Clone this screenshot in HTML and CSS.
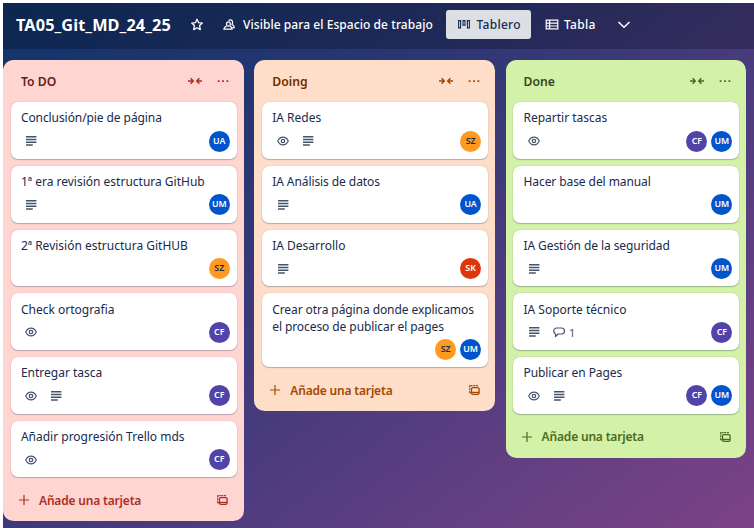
FILE: index.html
```html
<!DOCTYPE html>
<html lang="es">
<head>
<meta charset="utf-8">
<title>TA05_Git_MD_24_25</title>
<link rel="stylesheet" href="styles.css">
</head>
<body>
<svg class="defs" width="0" height="0" aria-hidden="true">
  <symbol id="desc" viewBox="0 0 14 14"><path d="M2 2.800h10.400M2 5.500h10.400M2 8.200h10.400M2 10.900h6.800" stroke="currentColor" stroke-width="1.500" fill="none"/></symbol>
  <symbol id="eye" viewBox="0 0 14 14"><path d="M1.700 7C2.900 4.500 4.700 3.100 7 3.100s4.100 1.400 5.300 3.900C11.100 9.500 9.300 10.900 7 10.900S2.900 9.500 1.700 7Z" fill="none" stroke="currentColor" stroke-width="1.100"/><circle cx="7" cy="7" r="1.700" fill="none" stroke="currentColor" stroke-width="1.200"/></symbol>
  <symbol id="comment" viewBox="0 0 14 14"><path d="M4.800 3h4.700a3 3 0 0 1 0 6H6.200L3.500 11.600V9C2.300 8.300 1.700 7.200 1.700 6.100A3.100 3.100 0 0 1 4.800 3Z" fill="none" stroke="currentColor" stroke-width="1.200" stroke-linejoin="round"/></symbol>
  <symbol id="collapse" viewBox="0 0 16 10"><path d="M1 5h5M3.600 2.200 6.300 5 3.600 7.800M15 5h-5M12.400 2.200 9.700 5l2.700 2.800" fill="none" stroke="currentColor" stroke-width="1.500" stroke-linejoin="round"/></symbol>
  <symbol id="more" viewBox="0 0 12 4"><path d="M.7 1.200h1.800v1.800H.7zM5.100 1.200h1.800v1.800H5.100zM9.500 1.200h1.800v1.800H9.500z" fill="currentColor"/></symbol>
  <symbol id="plus" viewBox="0 0 12 12"><path d="M6 1v10M1 6h10" stroke="currentColor" stroke-width="1.200"/></symbol>
  <symbol id="template" viewBox="0 0 12 12"><path d="M1.700 9V1.700h8.600M1.700 9h1.500" fill="none" stroke="currentColor" stroke-width="1.200" stroke-dasharray="2 .7"/><rect x="3.500" y="3.700" width="7.600" height="6.600" rx="1.400" fill="none" stroke="currentColor" stroke-width="1.300"/><path d="M3.500 7.800h7.600v1.300H3.500z" fill="currentColor"/></symbol>
</svg>

<div class="app">
  <header class="bar">
    <h1>TA05_Git_MD_24_25</h1>
    <svg class="star" viewBox="0 0 14 14"><path d="m7 1.300 1.600 3.400 3.700.4-2.700 2.500.7 4L7 9.800l-3.300 1.800.7-4-2.700-2.500 3.700-.4Z" fill="none" stroke="currentColor" stroke-width="1.300" stroke-linejoin="round"/></svg>
    <svg class="people" viewBox="0 0 14 14"><ellipse cx="6.400" cy="6" rx="1.900" ry="2.100" fill="none" stroke="currentColor" stroke-width="1.200"/><path d="M4.600 8.100C3.100 8.500 2.200 9.500 1.800 11.200h8.400C9.900 9.600 9.200 8.600 8 8.100M6.600 2.700C7.200 2 8 1.700 8.800 1.900c2 .5 2.300 3 1.100 4.500 1.500.6 2.300 1.700 2.500 3.300h-2" fill="none" stroke="currentColor" stroke-width="1.200" stroke-linejoin="round"/></svg>
    <span class="visibility">Visible para el Espacio de trabajo</span>
    <a class="view active"><svg viewBox="0 0 14 12"><path d="M1.600 1.600h2v7.300h-2zM6 1.600h2v4.500H6zM10.400 1.600h2v7.300h-2z" fill="none" stroke="currentColor" stroke-width="1.100"/></svg><span>Tablero</span></a>
    <a class="view table"><svg viewBox="0 0 14 12"><path d="M1.200 1.200h11.600v8.600H1.200zM1.200 4.100h11.600M1.200 7h11.600M4.600 1.200v8.600" fill="none" stroke="currentColor" stroke-width="1.200"/></svg><span>Tabla</span></a>
    <svg class="chevron" viewBox="0 0 14 10"><path d="m1.500 2 5.500 5.300L12.500 2" fill="none" stroke="currentColor" stroke-width="1.500"/></svg>
  </header>

  <main class="board">
    <section class="list red">
      <header><h2>To DO</h2><svg class="collapse"><use href="#collapse"/></svg><svg class="more"><use href="#more"/></svg></header>
      <article><p class="tight">Conclusión/pie de página</p><div class="meta"><svg><use href="#desc"/></svg><div class="who"><b class="blue">UA</b></div></div></article>
      <article><p>1ª era revisión estructura GitHub</p><div class="meta"><svg><use href="#desc"/></svg><div class="who"><b class="blue">UM</b></div></div></article>
      <article><p>2ª Revisión estructura GitHUB</p><div class="meta"><div class="who"><b class="orange-user">SZ</b></div></div></article>
      <article><p>Check ortografia</p><div class="meta"><svg><use href="#eye"/></svg><div class="who"><b class="violet">CF</b></div></div></article>
      <article><p>Entregar tasca</p><div class="meta"><svg><use href="#eye"/></svg><svg><use href="#desc"/></svg><div class="who"><b class="violet">CF</b></div></div></article>
      <article><p>Añadir progresión Trello mds</p><div class="meta"><svg><use href="#eye"/></svg><div class="who"><b class="violet">CF</b></div></div></article>
      <footer><svg class="plus"><use href="#plus"/></svg><span>Añade una tarjeta</span><svg class="template"><use href="#template"/></svg></footer>
    </section>

    <section class="list peach">
      <header><h2>Doing</h2><svg class="collapse"><use href="#collapse"/></svg><svg class="more"><use href="#more"/></svg></header>
      <article><p>IA Redes</p><div class="meta"><svg><use href="#eye"/></svg><svg><use href="#desc"/></svg><div class="who"><b class="orange-user">SZ</b></div></div></article>
      <article><p class="tight">IA Análisis de datos</p><div class="meta"><svg><use href="#desc"/></svg><div class="who"><b class="blue">UA</b></div></div></article>
      <article><p>IA Desarrollo</p><div class="meta"><svg><use href="#desc"/></svg><div class="who"><b class="scarlet">SK</b></div></div></article>
      <article><p class="tight">Crear otra página donde explicamos<br>el proceso de publicar el pages</p><div class="meta"><div class="who"><b class="orange-user">SZ</b><b class="blue">UM</b></div></div></article>
      <footer><svg class="plus"><use href="#plus"/></svg><span>Añade una tarjeta</span><svg class="template"><use href="#template"/></svg></footer>
    </section>

    <section class="list lime">
      <header><h2>Done</h2><svg class="collapse"><use href="#collapse"/></svg><svg class="more"><use href="#more"/></svg></header>
      <article><p>Repartir tascas</p><div class="meta"><svg><use href="#eye"/></svg><div class="who"><b class="violet">CF</b><b class="blue">UM</b></div></div></article>
      <article><p class="tight">Hacer base del manual</p><div class="meta"><div class="who"><b class="blue">UM</b></div></div></article>
      <article><p class="tight">IA Gestión de la seguridad</p><div class="meta"><svg><use href="#desc"/></svg><div class="who"><b class="blue">UM</b></div></div></article>
      <article><p>IA Soporte técnico</p><div class="meta"><svg><use href="#desc"/></svg><svg><use href="#comment"/></svg><span class="count">1</span><div class="who"><b class="violet">CF</b></div></div></article>
      <article><p class="tight">Publicar en Pages</p><div class="meta"><svg><use href="#eye"/></svg><svg><use href="#desc"/></svg><div class="who"><b class="violet">CF</b><b class="blue">UM</b></div></div></article>
      <footer><svg class="plus"><use href="#plus"/></svg><span>Añade una tarjeta</span><svg class="template"><use href="#template"/></svg></footer>
    </section>
  </main>
</div>
</body>
</html>
```
FILE: styles.css
```css
* { box-sizing: border-box; }
html, body { margin: 0; height: 100%; overflow: hidden; background: #fff; }
body { padding: 3px 0 0 3px; font-family: "Noto Sans", "Open Sans", sans-serif; font-size: 12px; color: #172b4d; }
svg { display: block; flex: none; }
.defs { position: absolute; }
h1, h2, p { margin: 0; white-space: nowrap; }

.app { height: 525px; background: linear-gradient(143deg, #10346b 0%, #273672 30%, #533d80 66%, #7d4287 100%); }
.bar { height: 46px; display: flex; align-items: center; padding: 0 0 3px 13px; background: #0000003d; color: #fff; }
.bar h1 { width: 155px; font-size: 16.300px; font-weight: 700; letter-spacing: .1px; }
.star { width: 14px; height: 14px; margin-left: 19px; }
.people { width: 14px; height: 14px; margin-left: 18px; }
.visibility { width: 190px; margin-left: 7px; font-weight: 500; letter-spacing: .06px; white-space: nowrap; }
.view { display: flex; align-items: center; height: 29px; font-weight: 500; letter-spacing: .3px; }
.view svg { width: 14px; height: 12px; margin-right: 5px; }
.view.active { width: 85px; margin-left: 13.400px; padding-left: 11px; background: #dcdfe4; color: #172b4d; border-radius: 3px; }
.table { width: 65px; margin-left: 13.600px; }
.chevron { width: 14px; height: 10px; margin-left: 7px; }

.board { display: flex; align-items: flex-start; gap: 10.500px; padding-top: 11px; }
.list { width: 240.800px; padding: 0 7px 0 7.500px; border-radius: 10.600px; }
.list > header { height: 42.300px; display: flex; align-items: center; padding: 0 8px 0 10.500px; }
.list h2 { flex: 1; font-size: 12.200px; font-weight: 600; }
.collapse { width: 16px; height: 10px; margin-right: 14px; }
.more { width: 12px; height: 4px; }
.collapse, .more, .list footer { color: var(--accent); }
.red { background: #ffd5d2; --accent: #ae2e24; }
.red h2 { color: #5d1f1a; }
.peach { background: #fedec8; --accent: #a54800; }
.peach h2 { color: #702e00; }
.lime { background: #d3f1a7; --accent: #4c6b1f; }
.lime h2 { color: #37471f; }

article { min-height: 56.700px; margin-bottom: 7px; padding: 7.200px 7px 6.800px 10.400px; border-radius: 7px; background: #fff; box-shadow: 0 1px 1px #091e4240, 0 0 1px #091e424f; }
article p { line-height: 17.700px; }
.tight { letter-spacing: -.08px; }
.meta { display: flex; align-items: center; height: 21.300px; margin-top: 3.400px; padding-left: 3.600px; color: #44546f; }
.meta > svg { width: 14px; height: 14px; margin-right: 11px; }
.count { margin-left: -8px; font-size: 11px; }
.who { display: flex; gap: 4px; margin-left: auto; }
.who b { width: 21px; height: 21px; border-radius: 50%; font-size: 8.800px; font-weight: 600; line-height: 21px; text-align: center; color: #fff; }
.blue { background: #0055cc; }
.violet { background: #5243aa; }
.scarlet { background: #de350b; }
.who .orange-user { background: #ff991f; color: #172b4d; }
.list footer { height: 37px; display: flex; align-items: center; padding: 0 8.500px 5px 7.500px; font-weight: 600; letter-spacing: -.18px; }
.plus { width: 12px; height: 12px; margin-right: 9px; }
.list footer span { flex: 1; }
.template { width: 12px; height: 12px; }
```
